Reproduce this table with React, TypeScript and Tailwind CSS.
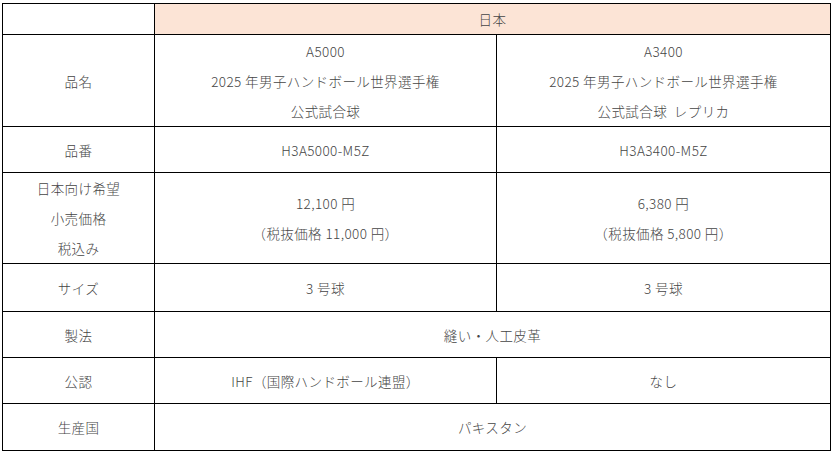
import React from "react";

const font = { fontFamily: '"Noto Sans CJK JP", "Noto Sans", sans-serif' };

const cell = "border border-black text-center align-middle p-0 leading-[30px]";

export default function App() {
  return (
    <div className="bg-white w-[835px] h-[455px] pl-[2px] pt-[3px]" style={font}>
      <table className="border-collapse table-fixed w-[828px] text-[13.5px] font-light tracking-[0.4px] text-[#454545]">
        <colgroup>
          <col className="w-[152px]" />
          <col className="w-[342px]" />
          <col className="w-[334px]" />
        </colgroup>
        <tbody>
          <tr className="h-[31px]">
            <td className={cell}></td>
            <td className={`${cell} bg-[#fce4d6]`} colSpan={2}>
              日本
            </td>
          </tr>
          <tr className="h-[92px]">
            <td className={cell}>品名</td>
            <td className={cell}>
              <div>A5000</div>
              <div>2025 年男子ハンドボール世界選手権</div>
              <div>公式試合球</div>
            </td>
            <td className={cell}>
              <div>A3400</div>
              <div>2025 年男子ハンドボール世界選手権</div>
              <div>公式試合球&nbsp; レプリカ</div>
            </td>
          </tr>
          <tr className="h-[46px]">
            <td className={cell}>品番</td>
            <td className={cell}>H3A5000-M5Z</td>
            <td className={cell}>H3A3400-M5Z</td>
          </tr>
          <tr className="h-[91px]">
            <td className={cell}>
              <div>日本向け希望</div>
              <div>小売価格</div>
              <div>税込み</div>
            </td>
            <td className={cell}>
              <div>12,100 円</div>
              <div>（税抜価格 11,000 円）</div>
            </td>
            <td className={cell}>
              <div>6,380 円</div>
              <div>（税抜価格 5,800 円）</div>
            </td>
          </tr>
          <tr className="h-[48px]">
            <td className={cell}>サイズ</td>
            <td className={cell}>3 号球</td>
            <td className={cell}>3 号球</td>
          </tr>
          <tr className="h-[46px]">
            <td className={cell}>製法</td>
            <td className={cell} colSpan={2}>
              縫い・人工皮革
            </td>
          </tr>
          <tr className="h-[46px]">
            <td className={cell}>公認</td>
            <td className={cell}>IHF（国際ハンドボール連盟）</td>
            <td className={cell}>なし</td>
          </tr>
          <tr className="h-[47px]">
            <td className={cell}>生産国</td>
            <td className={cell} colSpan={2}>
              パキスタン
            </td>
          </tr>
        </tbody>
      </table>
    </div>
  );
}
